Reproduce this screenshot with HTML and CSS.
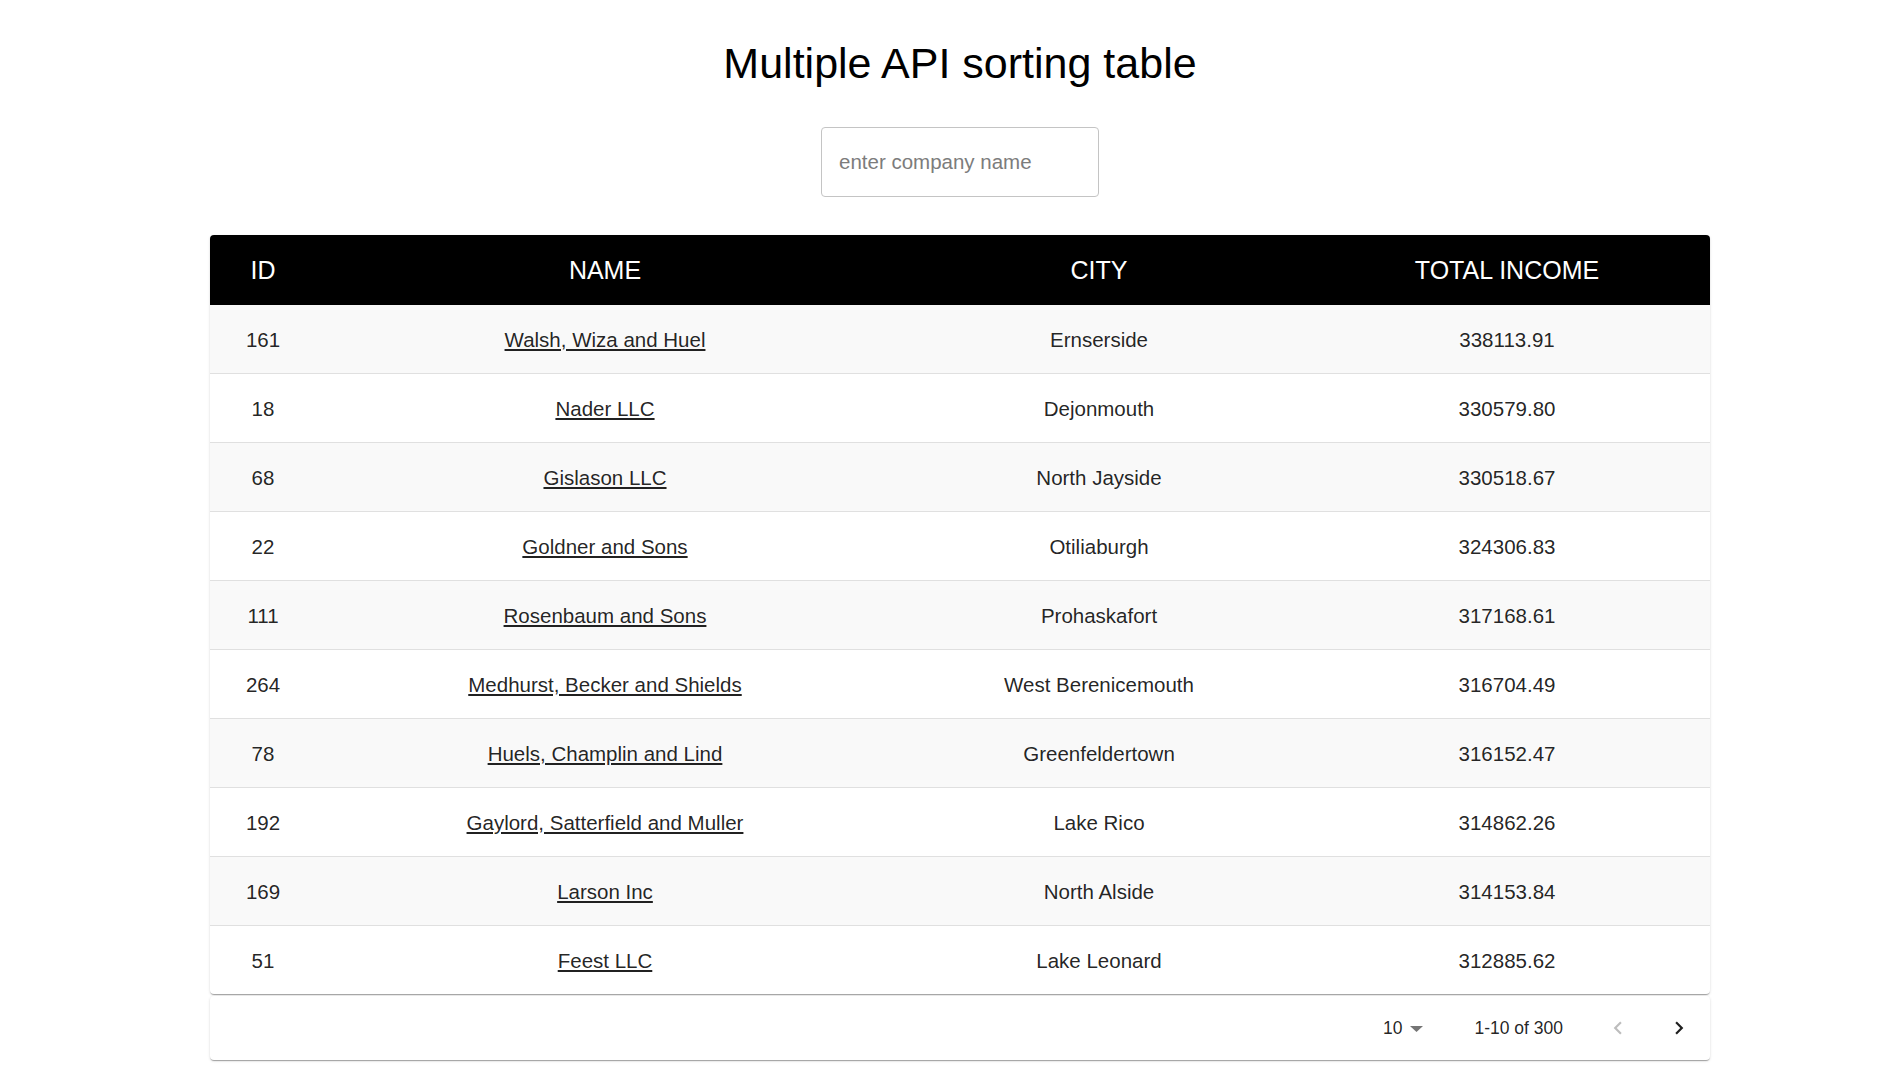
FILE: index.html
```html
<!DOCTYPE html>
<html lang="en">
<head>
<meta charset="utf-8">
<title>Multiple API sorting table</title>
<link rel="stylesheet" href="styles.css">
</head>
<body>
<div class="page">
  <h1 class="title">Multiple API sorting table</h1>
  <input class="search" type="text" placeholder="enter company name">
  <div class="paper table-paper">
    <table class="grid">
      <colgroup>
        <col class="c-id"><col class="c-name"><col class="c-city"><col class="c-income">
      </colgroup>
      <thead>
        <tr><th>ID</th><th>NAME</th><th>CITY</th><th>TOTAL INCOME</th></tr>
      </thead>
      <tbody>
        <tr><td>161</td><td><a href="#">Walsh, Wiza and Huel</a></td><td>Ernserside</td><td>338113.91</td></tr>
        <tr><td>18</td><td><a href="#">Nader LLC</a></td><td>Dejonmouth</td><td>330579.80</td></tr>
        <tr><td>68</td><td><a href="#">Gislason LLC</a></td><td>North Jayside</td><td>330518.67</td></tr>
        <tr><td>22</td><td><a href="#">Goldner and Sons</a></td><td>Otiliaburgh</td><td>324306.83</td></tr>
        <tr><td>111</td><td><a href="#">Rosenbaum and Sons</a></td><td>Prohaskafort</td><td>317168.61</td></tr>
        <tr><td>264</td><td><a href="#">Medhurst, Becker and Shields</a></td><td>West Berenicemouth</td><td>316704.49</td></tr>
        <tr><td>78</td><td><a href="#">Huels, Champlin and Lind</a></td><td>Greenfeldertown</td><td>316152.47</td></tr>
        <tr><td>192</td><td><a href="#">Gaylord, Satterfield and Muller</a></td><td>Lake Rico</td><td>314862.26</td></tr>
        <tr><td>169</td><td><a href="#">Larson Inc</a></td><td>North Alside</td><td>314153.84</td></tr>
        <tr><td>51</td><td><a href="#">Feest LLC</a></td><td>Lake Leonard</td><td>312885.62</td></tr>
      </tbody>
    </table>
  </div>
  <div class="paper pager">
    <div class="per-page">
      <span>10</span>
      <svg class="caret" width="14" height="6" viewBox="0 0 14 6"><path d="M0 0h13L6.5 6z" fill="#757575"/></svg>
    </div>
    <span class="range">1-10 of 300</span>
    <svg class="nav nav-prev" width="26" height="26" viewBox="0 0 24 24"><path d="M15.41 16.59L10.83 12l4.58-4.59L14 6l-6 6 6 6 1.41-1.41z" fill="#bdbdbd"/></svg>
    <svg class="nav nav-next" width="26" height="26" viewBox="0 0 24 24"><path d="M8.59 16.59L13.17 12 8.59 7.41 10 6l6 6-6 6-1.41-1.41z" fill="#1f1f1f"/></svg>
  </div>
</div>
</body>
</html>
```

FILE: styles.css
```css
html, body {
  margin: 0;
  padding: 0;
  background: #ffffff;
}

body {
  font-family: "Liberation Sans", Arial, sans-serif;
  color: rgba(0, 0, 0, 0.87);
}

.page {
  margin-left: 31px;
  display: flex;
  flex-direction: column;
  align-items: center;
  padding-bottom: 28px;
}

.title {
  margin: 38px 0 0 0;
  font-size: 43px;
  line-height: 50px;
  font-weight: 400;
  color: #000;
}

.search {
  margin-top: 39px;
  box-sizing: border-box;
  width: 278px;
  height: 70px;
  padding: 0 17px;
  border: 1px solid #c4c4c4;
  border-radius: 4px;
  font-family: "Liberation Sans", Arial, sans-serif;
  font-size: 20.5px;
  color: #222;
  outline: none;
}

.search::placeholder {
  color: #7c7c7c;
}

.paper {
  width: 1500px;
  background: #fff;
  border-radius: 4px;
  box-shadow: 0 2px 1px -1px rgba(0,0,0,0.2), 0 1px 1px 0 rgba(0,0,0,0.14), 0 1px 3px 0 rgba(0,0,0,0.12);
}

.table-paper {
  margin-top: 38px;
  overflow: hidden;
}

.grid {
  width: 100%;
  border-collapse: collapse;
  table-layout: fixed;
}

.c-id { width: 106px; }
.c-name { width: 578px; }
.c-city { width: 410px; }
.c-income { width: 406px; }

.grid th {
  height: 70px;
  padding: 0;
  background: #000;
  color: #fff;
  font-size: 25px;
  font-weight: 400;
  text-align: center;
}

.grid td {
  height: 66px;
  padding: 2px 0 0 0;
  font-size: 20.5px;
  text-align: center;
  border-bottom: 1px solid #e0e0e0;
  color: rgba(0, 0, 0, 0.87);
}

.grid tbody tr:nth-child(odd) td {
  background: #f9f9f9;
}

.grid tbody tr:last-child td {
  border-bottom: none;
}

.grid a {
  color: rgba(0, 0, 0, 0.87);
  text-decoration: underline;
}

.pager {
  margin-top: 2px;
  height: 64px;
  display: flex;
  align-items: center;
  justify-content: flex-end;
  font-size: 17.5px;
  color: rgba(0, 0, 0, 0.87);
  padding-right: 18px;
  box-sizing: border-box;
}

.per-page {
  display: flex;
  align-items: center;
  gap: 8px;
}

.caret {
  display: block;
  margin-top: 2px;
}

.range {
  margin-left: 50px;
}

.nav {
  display: block;
}

.nav-prev {
  margin-left: 42px;
}

.nav-next {
  margin-left: 35px;
}
```
